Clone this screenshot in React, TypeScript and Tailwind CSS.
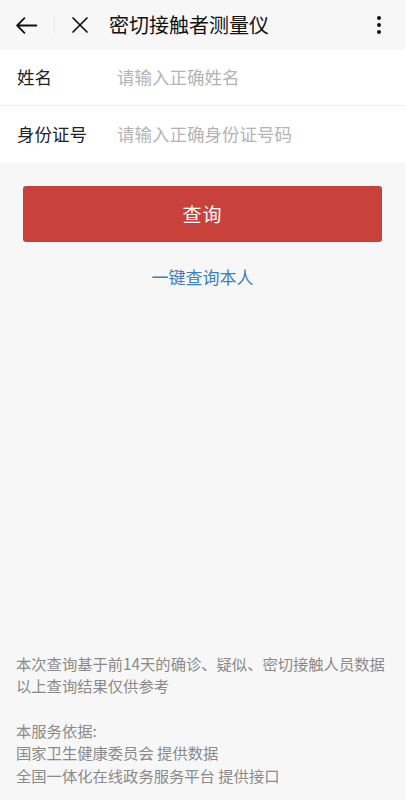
const FONT = { fontFamily: '"Noto Sans CJK SC", "Noto Sans", sans-serif' };

export default function App() {
  return (
    <div className="min-h-[800px] bg-[#f7f7f7] flex flex-col" style={FONT}>
      {/* 顶部导航 */}
      <div className="h-[50px] flex items-center bg-[#f7f7f7] shrink-0">
        <button className="w-[48px] h-[50px] flex items-center justify-center pl-1">
          <svg width="25" height="25" viewBox="0 0 24 24" fill="none" stroke="#111" strokeWidth="1.7" strokeLinecap="round" strokeLinejoin="round">
            <path d="M21.5 12H3M10 5l-7 7 7 7" />
          </svg>
        </button>
        <div className="w-px h-[18px] bg-[#e6e6e6] ml-[6px]" />
        <button className="w-[46px] h-[50px] flex items-center justify-center ml-[2px]">
          <svg width="20" height="20" viewBox="0 0 20 20" fill="none" stroke="#111" strokeWidth="1.7" strokeLinecap="round">
            <path d="M3 3l14 14M17 3L3 17" />
          </svg>
        </button>
        <h1 className="text-[20px] text-[#111] ml-[6px]">密切接触者测量仪</h1>
        <div className="ml-auto mr-[24px] flex flex-col gap-[3px]">
          <span className="w-[4px] h-[4px] rounded-full bg-[#111]" />
          <span className="w-[4px] h-[4px] rounded-full bg-[#111]" />
          <span className="w-[4px] h-[4px] rounded-full bg-[#111]" />
        </div>
      </div>

      {/* 表单 */}
      <div className="bg-white">
        <div className="h-[56px] flex items-center pl-[17px] border-b border-[#ececec]">
          <span className="w-[100px] text-[17.5px] text-[#222]">姓名</span>
          <span className="text-[17.5px] text-[#b4b4b4]">请输入正确姓名</span>
        </div>
        <div className="h-[57px] flex items-center pl-[17px]">
          <span className="w-[100px] text-[17.5px] text-[#222]">身份证号</span>
          <span className="text-[17.5px] text-[#b4b4b4]">请输入正确身份证号码</span>
        </div>
      </div>

      {/* 按钮 */}
      <div className="px-[23px] pt-[23px]">
        <button className="w-full h-[56px] rounded-[3px] bg-[#c9413b] text-white text-[19px] tracking-[1px]">
          查询
        </button>
      </div>
      <div className="text-center text-[17px] text-[#3a7fc0] mt-[22px]">一键查询本人</div>

      {/* 底部说明 */}
      <div className="mt-auto px-[16px] pb-[14px] text-[15.3px] leading-[22.5px] text-[#8a8a8a]">
        <p>本次查询基于前14天的确诊、疑似、密切接触人员数据</p>
        <p>以上查询结果仅供参考</p>
        <p className="mt-[22px]">本服务依据:</p>
        <p>国家卫生健康委员会 提供数据</p>
        <p>全国一体化在线政务服务平台 提供接口</p>
      </div>
    </div>
  );
}
